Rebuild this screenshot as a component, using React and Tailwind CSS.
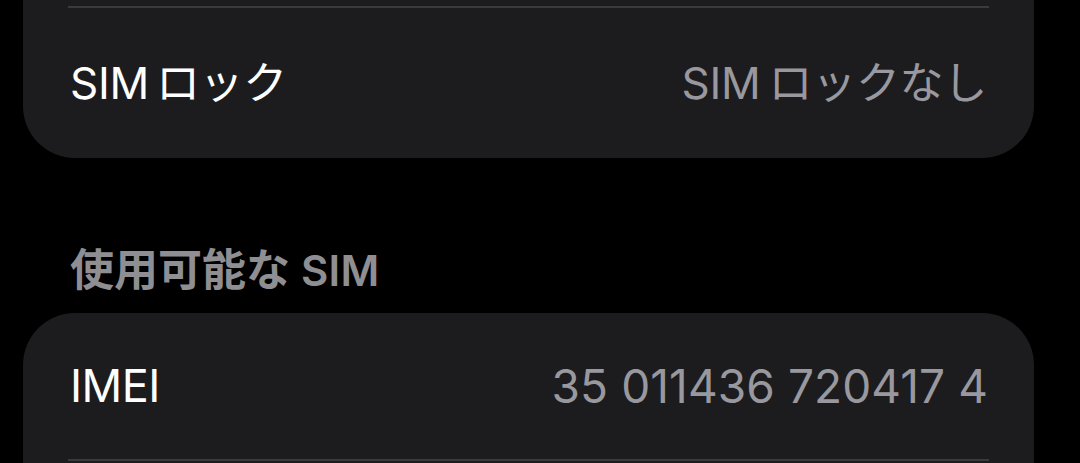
export default function App() {
  const font = { fontFamily: 'Inter, "Noto Sans CJK JP", sans-serif' };
  return (
    <div className="w-[1080px] h-[463px] bg-black overflow-hidden" style={font}>
      <div className="ml-[23px] w-[1011px]">
        {/* top card (continued from above) */}
        <div className="bg-[#1c1c1e] rounded-b-[52px] pt-[6px]">
          <div className="mx-[45px] h-[2px] bg-[#3a3a3c]" />
          <div className="h-[150px] flex items-center justify-between pl-[47px] pr-[47px]">
            <span className="text-[44px] text-white tracking-[-0.3px] whitespace-nowrap">
              SIM<span className="ml-[7px]">ロック</span>
            </span>
            <span className="text-[44px] text-[#98989e] tracking-[-0.3px] whitespace-nowrap">
              SIM<span className="ml-[8px]">ロックなし</span>
            </span>
          </div>
        </div>
        {/* section header */}
        <div className="h-[155px] flex items-center pl-[47px] pt-[68px]">
          <span className="font-semibold text-[#8e8e93] whitespace-nowrap">
            <span className="text-[44px]">使用可能な</span>
            <span className="text-[42px] ml-[11px] tracking-[0.3px]">SIM</span>
          </span>
        </div>
        {/* bottom card */}
        <div className="bg-[#1c1c1e] rounded-t-[52px] h-[200px]">
          <div className="h-[146px] flex items-center justify-between pl-[47px] pr-[46px]">
            <span className="text-[45px] text-white tracking-[-0.5px]">IMEI</span>
            <span className="text-[46px] text-[#98989e] tracking-[0.1px]">35 011436 720417 4</span>
          </div>
          <div className="mx-[45px] h-[2px] bg-[#3a3a3c]" />
        </div>
      </div>
    </div>
  );
}
